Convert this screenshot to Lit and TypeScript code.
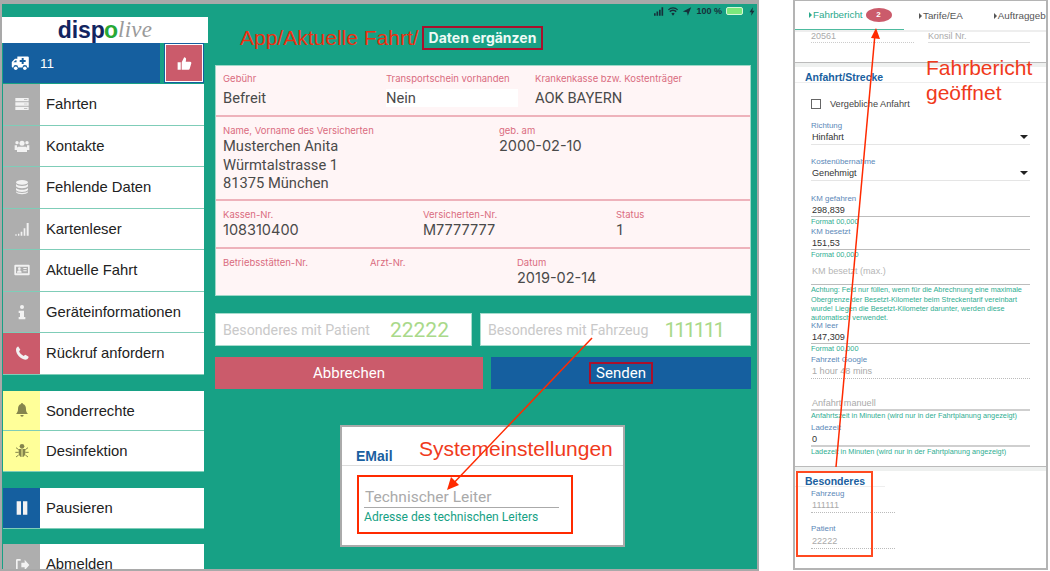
import { LitElement, html, css, svg } from "lit";
import { customElement } from "lit/decorators.js";

const ICONS = {
  server: svg`<path d="M2 3h20v5H2zM2 9.500h20v5H2zM2 16h20v5H2z"/><path fill="#aeaeae" d="M15 5h5v1h-5zM15 11.500h5v1h-5zM15 18h5v1h-5z"/>`,
  users: svg`<circle cx="12" cy="8" r="3.800"/><circle cx="4.500" cy="7" r="2.500"/><circle cx="19.500" cy="7" r="2.500"/><path d="M6.500 13h11c1 0 2 1 2 2v6h-15v-6c0-1 1-2 2-2zM1 11h3.500v7H1zM19.500 11H23v7h-3.500z"/>`,
  db: svg`<ellipse cx="12" cy="5" rx="9" ry="3.500"/><path d="M3 7.500c1 2 5 3 9 3s8-1 9-3V11c-1 2-5 3-9 3s-8-1-9-3zM3 13c1 2 5 3 9 3s8-1 9-3v3.500c-1 2-5 3-9 3s-8-1-9-3zM3 18.500c1 2 5 2.500 9 2.500s8-.5 9-2.500V20c-1 2-5 3-9 3s-8-1-9-3z"/>`,
  signal: svg`<path d="M2 20h2v2H2zM6 19h2v3H6zM10 16h2.500v6H10zM14.500 11H17v11h-2.500zM19 3h3v19h-3z"/>`,
  card: svg`<path fill-rule="evenodd" d="M2 4h20a1.500 1.500 0 011.500 1.500v13A1.500 1.500 0 0122 20H2a1.500 1.500 0 01-1.500-1.500v-13A1.500 1.500 0 012 4zM3 7v10h18V7z"/><circle cx="8" cy="10" r="2"/><path d="M4.500 16c0-2 1-3.500 3.500-3.500s3.500 1.500 3.500 3.500zM14 9h5v1.500h-5zM14 12.500h5V14h-5z"/>`,
  info: svg`<circle cx="12" cy="4.500" r="3"/><path d="M7 10h8v9.500h2V23H7v-3.500h2V13.500H7z"/>`,
  phone: svg`<path d="M6.600 2.500 9.500 7 7.600 9.500c1 2.700 4 5.800 6.900 6.900l2.500-1.900 4.500 2.900c.4.300.5.800.3 1.200-1 2-2.700 3.400-4.800 3.400C10 21 3 14 3 7c0-2 1.400-3.800 2.400-4.400.4-.2.900-.3 1.200-.1z"/>`,
  bell: svg`<path d="M12 1.500a1.500 1.500 0 011.500 1.600C17 3.800 18 7.500 18 11c0 3 1 5 3 7H3c2-2 3-4 3-7 0-3.500 1-7.200 4.500-7.900A1.500 1.500 0 0112 1.500zM9.500 19.500h5a2.500 2.500 0 01-5 0z"/>`,
  bug: svg`<circle cx="12" cy="5" r="3.500"/><path d="M7 9h4.300v12C9 21 7 18 7 15zM12.700 9H17v6c0 3-2 6-4.300 6z"/><path stroke="currentColor" stroke-width="1.500" fill="none" d="M7 10 3 7M17 10l4-3M7 14H2M17 14h5M7 18l-4 3M17 18l4 3"/>`,
  pause: svg`<path d="M4 2h6.500v20H4zM13.500 2H20v20h-6.500z"/>`,
  out: svg`<path d="M10 3H5a2 2 0 00-2 2v14a2 2 0 002 2h5v-2.500H5.500v-13H10z"/><path d="M11 8.500h5V4l7 8-7 8v-4.500h-5z"/>`,
};

type IconName = keyof typeof ICONS;

const MENU: { label: string; icon: IconName; tone: string }[][] = [
  [
    { label: "Fahrten", icon: "server", tone: "grey" },
    { label: "Kontakte", icon: "users", tone: "grey" },
    { label: "Fehlende Daten", icon: "db", tone: "grey" },
    { label: "Kartenleser", icon: "signal", tone: "grey" },
    { label: "Aktuelle Fahrt", icon: "card", tone: "grey" },
    { label: "Geräteinformationen", icon: "info", tone: "grey" },
    { label: "Rückruf anfordern", icon: "phone", tone: "red" },
  ],
  [
    { label: "Sonderrechte", icon: "bell", tone: "yellow" },
    { label: "Desinfektion", icon: "bug", tone: "yellow" },
  ],
  [{ label: "Pausieren", icon: "pause", tone: "blue" }],
  [{ label: "Abmelden", icon: "out", tone: "grey" }],
];

@customElement("app-root")
export class AppRoot extends LitElement {
  static override styles = css`
    :host {
      display: block;
      width: 1050px;
      height: 571px;
      position: relative;
      overflow: hidden;
      background: #fff;
      font-family: "Liberation Sans", Arial, sans-serif;
    }

    .page {
      display: flex;
      height: 571px;
    }

    /* left: the tablet screenshot */
    .tablet {
      box-sizing: border-box;
      width: 759px;
      height: 571px;
      flex: none;
      display: flex;
      background: #17a185;
      border: solid #a9a9a9;
      border-width: 4px 2px 2px 2px;
      overflow: hidden;
    }

    .side {
      width: 206px;
      flex: none;
      padding-top: 13px;
    }

    .logo {
      height: 26px;
      background: #fff;
      display: flex;
      justify-content: center;
      align-items: center;
      font-size: 23px;
      line-height: 26px;
    }

    .logo b {
      color: #12245f;
    }

    .logo .o {
      color: #27a935;
      margin-left: -1px;
    }

    .logo i {
      font-family: "Liberation Serif", serif;
      font-weight: 400;
      color: #9a9a9a;
      letter-spacing: 0.3px;
    }

    .status {
      height: 40px;
      margin-left: 1px;
      width: 201px;
      display: flex;
      gap: 4px;
    }

    .vehicle {
      flex: 1;
      display: flex;
      align-items: center;
      gap: 10px;
      padding-left: 8px;
      background: #155f9f;
      color: #fff;
      font-size: 13.500px;
    }

    .vehicle svg {
      width: 19px;
      height: 19px;
      fill: #fff;
    }

    .thumb {
      box-sizing: border-box;
      width: 40px;
      border: 2px solid #fff;
      background: #cb5b6b;
      display: flex;
      align-items: center;
      justify-content: center;
      outline: 1px solid #155f9f;
      outline-offset: -1px;
    }

    .thumb svg {
      width: 15px;
      height: 15px;
      fill: #fff;
    }

    .menu {
      margin-left: 1px;
      width: 201px;
      margin-top: 16px;
    }

    .menu.first {
      margin-top: 1px;
    }

    .menu.last {
      margin-top: 15px;
    }

    .row {
      box-sizing: border-box;
      height: 41.500px;
      display: flex;
      background: #fff;
      border-bottom: 1px solid #7fcdb8;
      font-size: 14.800px;
      color: #222;
    }

    .menu.pair .row {
      height: 40.700px;
    }

    .row .icon {
      width: 37px;
      flex: none;
      display: flex;
      align-items: center;
      justify-content: center;
      color: #f2f2f2;
    }

    .row svg {
      width: 16px;
      height: 16px;
      fill: currentColor;
    }

    .row .text {
      padding-left: 6px;
      line-height: 41px;
    }

    .icon.grey {
      background: #aeaeae;
    }

    .icon.red {
      background: #cb5b6b;
    }

    .icon.blue {
      background: #155f9f;
    }

    .icon.yellow {
      background: #ffff99;
      color: #85854d !important;
    }

    /* main column of the tablet */
    .main {
      width: 536px;
      margin-left: 7px;
      flex: none;
    }

    .bar {
      height: 12px;
      margin-right: -6px;
      display: flex;
      justify-content: flex-end;
      align-items: center;
      gap: 4px;
      font: 700 9px "Liberation Sans", sans-serif;
      color: #16303a;
      padding-top: 1px;
    }

    .bar svg {
      width: 10px;
      height: 9px;
      fill: #16303a;
    }

    .battery {
      width: 15px;
      height: 6px;
      background: #7be87c;
      border: 1px solid #d5f7d8;
      border-radius: 2px;
    }

    .title {
      margin-top: 9px;
      height: 24px;
      padding-left: 25px;
      display: flex;
      align-items: center;
      gap: 3px;
      font-size: 21px;
      color: #ee2f10;
    }

    .boxed {
      box-sizing: border-box;
      height: 24px;
      border: 2px solid #a9102c;
      padding: 0 5px;
      color: #eefaf6;
      font: 700 14px/20px Inter, sans-serif;
    }

    .card {
      box-sizing: border-box;
      margin-top: 15px;
      height: 231px;
      background: #fff5f6;
      border: 1px solid #9fd8c8;
      font-family: Inter, sans-serif;
    }

    .line {
      display: grid;
      box-sizing: border-box;
      padding: 7px 7px 0;
      border-bottom: 2px solid #eeb2bb;
    }

    .line:last-child {
      border-bottom: none;
    }

    .l1 {
      height: 51px;
      grid-template-columns: 163px 149px 1fr;
    }

    .l2 {
      height: 84px;
      grid-template-columns: 276px 1fr;
      padding-top: 8px;
    }

    .l3 {
      height: 48px;
      grid-template-columns: 200px 193px 1fr;
      padding-top: 8px;
    }

    .l4 {
      height: 46px;
      grid-template-columns: 147px 147px 1fr;
      padding-top: 8px;
    }

    .cap {
      font-size: 9.500px;
      line-height: 12px;
      color: #da6c80;
    }

    .val {
      font: 14.700px/18.500px Roboto, sans-serif;
      color: #4a4a4a;
    }

    .val.num {
      font: 14.500px/18.500px Inter, sans-serif;
    }

    .l1 .val {
      margin-top: 4px;
      height: 18px;
    }

    .nein {
      background: #fff;
      width: 132px;
    }

    .fields {
      margin-top: 17px;
      display: grid;
      grid-template-columns: 257px 271px;
      gap: 8px;
    }

    .input {
      box-sizing: border-box;
      height: 33px;
      background: #fff;
      border: 1px solid #a6dccd;
      padding-left: 7px;
      display: flex;
      align-items: center;
      font: 14.200px Roboto, sans-serif;
      color: #c9c9c9;
    }

    .input span {
      margin-left: 20px;
      font-size: 21px;
      color: #a9d98a;
    }

    .input span.tight {
      margin-left: 16px;
      letter-spacing: -2px;
    }

    .actions {
      margin-top: 11px;
      display: grid;
      grid-template-columns: 268px 260px;
      gap: 8px;
    }

    .btn {
      height: 32px;
      display: flex;
      align-items: center;
      justify-content: center;
      color: #fff;
      font: 15px Roboto, sans-serif;
    }

    .btn.cancel {
      background: #cb5b6b;
    }

    .btn.send {
      background: #155f9f;
    }

    .btn.send span {
      border: 2px solid #a9102c;
      padding: 0 5px;
      line-height: 18px;
    }

    .mail {
      box-sizing: border-box;
      margin: 36px 0 0 125px;
      width: 285px;
      height: 122px;
      background: #fff;
      border: 2px solid #aaa;
    }

    .mail h3 {
      margin: 0;
      height: 39px;
      box-sizing: border-box;
      padding: 21px 0 0 14px;
      border-bottom: 1px solid #ddd;
      font-size: 14px;
      line-height: 16px;
      color: #1a5fa0;
    }

    .mail .hold {
      margin: 21px 0 0 22px;
      width: 195px;
      height: 21px;
      border-bottom: 1px solid #aaa;
      padding-left: 1px;
      box-sizing: border-box;
      font: 15.500px/20px Roboto, sans-serif;
      color: #aaa;
    }

    .mail .help {
      margin: 2px 0 0 22px;
      font: 12.100px/14px Roboto, sans-serif;
      color: #17a185;
    }

    /* right: the opened report */
    .report {
      box-sizing: border-box;
      width: 255px;
      height: 570px;
      margin-left: 34px;
      border: solid #b4b4b4;
      border-width: 1px 2px 2px 2px;
      overflow: hidden;
      background: #fff;
    }

    .tabs {
      height: 31px;
      box-sizing: border-box;
      display: flex;
      align-items: center;
      font-size: 9.800px;
      color: #555;
      white-space: nowrap;
      border-bottom: 2px solid #eee;
      overflow: hidden;
    }

    .tab {
      display: flex;
      align-items: center;
      flex: none;
    }

    .tab::before {
      content: "";
      border: 3px solid transparent;
      border-left: 3px solid currentColor;
      border-right: none;
      margin-right: 1px;
    }

    .tab.on {
      box-sizing: border-box;
      width: 109px;
      height: 31px;
      padding-left: 14px;
      color: #2aa98c;
      border-bottom: 2px solid #4dbb9f;
    }

    .tab + .tab {
      margin-left: 15px;
    }

    .tab + .tab + .tab {
      margin-left: 31px;
    }

    .badge {
      margin-left: 3px;
      width: 26px;
      height: 14px;
      border-radius: 50%;
      background: #cb5b6b;
      color: #fff;
      font-size: 8px;
      font-weight: 700;
      line-height: 14px;
      text-align: center;
    }

    .pad {
      padding-left: 16px;
      width: 219px;
    }

    .twin {
      display: grid;
      grid-template-columns: 103px 102px;
      gap: 14px;
      height: 11px;
      overflow: hidden;
      font-size: 9px;
      line-height: 8px;
      color: #aaa;
    }

    .twin div {
      border-bottom: 1.500px dotted #ccc;
      height: 10px;
    }

    .twin div + div {
      border-bottom: 2px solid #ddd;
    }

    .band {
      margin-top: 19px;
      height: 5px;
      border-top: 1.500px solid #bbb;
      background: #eef0ef;
      box-sizing: border-box;
    }

    .head {
      box-sizing: border-box;
      height: 16px;
      padding: 4px 0 0 10px;
      border-bottom: 1px solid #eee;
      font-size: 10.500px;
      font-weight: 700;
      line-height: 12px;
      color: #1a5fa0;
    }

    .check {
      margin-top: 15px;
      height: 12px;
      display: flex;
      align-items: center;
      font-size: 9.200px;
      color: #444;
    }

    .check i {
      box-sizing: border-box;
      width: 10px;
      height: 10px;
      border: 1px solid #666;
      margin-right: 9px;
    }

    .lab {
      height: 12px;
      font-size: 7.900px;
      line-height: 12px;
      color: #5b88b8;
    }

    .v {
      height: 11px;
      font-size: 9.100px;
      line-height: 11px;
      color: #333;
      padding-left: 1px;
      position: relative;
    }

    .v.sel::after {
      content: "";
      position: absolute;
      right: 2px;
      top: 3px;
      border: 4px solid transparent;
      border-top: 4px solid #222;
    }

    .v.tall {
      height: 25px;
      line-height: 25px;
      color: #b5b5b5;
    }

    .v.ghost {
      color: #aaa;
    }

    .rule {
      height: 1px;
      background: #bcbcbc;
    }

    .rule.soft {
      background: #e5e5e5;
    }

    .rule.fat {
      height: 2px;
      background: #cfcfcf;
    }

    .rule.dots {
      background: none;
      border-bottom: 1px dotted #bbb;
    }

    .hint {
      font-size: 7.300px;
      line-height: 9.200px;
      color: #2fae92;
      white-space: nowrap;
    }

    .gap1 {
      margin-top: 1px;
    }

    .gap10 {
      margin-top: 10px;
    }

    .gap11 {
      margin-top: 11px;
    }

    .gap12 {
      margin-top: 12px;
    }

    .gap19 {
      margin-top: 19px;
    }

    .up2 {
      margin-top: -2px;
    }

    .narrow {
      width: 84px;
    }

    .headnarrow {
      width: 90px;
    }

    /* red annotations painted over the screenshots */
    .marks {
      position: absolute;
      inset: 0;
      width: 1050px;
      height: 571px;
      pointer-events: none;
    }

    .note {
      position: absolute;
      color: #f03a1c;
      font-size: 21px;
      line-height: 25px;
      white-space: nowrap;
    }

    .note.system {
      left: 419px;
      top: 436px;
    }

    .note.opened {
      left: 926px;
      top: 55px;
    }
  `;

  private _icon(name: IconName) {
    return html`<svg viewBox="0 0 24 24">${ICONS[name]}</svg>`;
  }

  private _sidebar() {
    return html`
      <div class="side">
        <div class="logo"><b>disp</b><b class="o">o</b><i>live</i></div>
        <div class="status">
          <div class="vehicle">
            <svg viewBox="0 0 24 24">
              <path d="M1 16v-6l4-4h3V3h13a1.500 1.500 0 011.500 1.500V17h-2a3 3 0 00-6 0H9a3 3 0 00-6 0H2a1 1 0 01-1-1z" />
              <path fill="#155f9f" d="M13.500 5h2.500v2.500h2.500V10H16v2.500h-2.500V10H11V7.500h2.500zM3 10.500 5.800 8H7v2.500z" />
              <circle cx="6" cy="18" r="2.300" />
              <circle cx="17.500" cy="18" r="2.300" />
            </svg>
            <span>11</span>
          </div>
          <div class="thumb">
            <svg viewBox="0 0 24 24">
              <path d="M1 10h5v12H1zM7.500 10l4-8c2 0 3.300 1.500 3 3.500L14 9h7c1.500 0 2.300 1.500 1.800 2.800l-2.500 8.500c-.3 1-1 1.700-2 1.700H7.500z" />
            </svg>
          </div>
        </div>
        ${MENU.map(
          (group, i) => html`
            <div class="menu ${i === 0 ? "first" : ""} ${i === 1 ? "pair" : ""} ${i === 3 ? "last" : ""}">
              ${group.map(
                (item) => html`
                  <div class="row">
                    <div class="icon ${item.tone}">${this._icon(item.icon)}</div>
                    <div class="text">${item.label}</div>
                  </div>
                `
              )}
            </div>
          `
        )}
      </div>
    `;
  }

  private _cell(label: string, value = "", extra = "") {
    return html`
      <div>
        <div class="cap">${label}</div>
        <div class="val ${extra}">${value}</div>
      </div>
    `;
  }

  private _main() {
    return html`
      <div class="main">
        <div class="bar">
          <svg viewBox="0 0 12 10"><path d="M0 7h2v3H0zM3 5h2v5H3zM6 3h2v7H6zM9 0h2v10H9z" /></svg>
          <svg viewBox="0 0 12 10"><path d="M6 10 4 7.500a3 3 0 014 0zM2.800 6 1.500 4.500a6.500 6.500 0 019 0L9.200 6a4.500 4.500 0 00-6.400 0zM.8 3.500 0 2.500a8.500 8.500 0 0112 0l-.8 1a7.500 7.500 0 00-10.400 0z" /></svg>
          <svg viewBox="0 0 12 10"><path d="M1 5 11 0 7 10 6 6z" /></svg>
          <span>100 %</span>
          <div class="battery"></div>
          <svg viewBox="0 0 12 10"><path d="M7 0 3 6h2.500L5 10l4-6H6.500z" /></svg>
        </div>
        <div class="title">
          <span>App/Aktuelle Fahrt/</span>
          <span class="boxed">Daten ergänzen</span>
        </div>
        <div class="card">
          <div class="line l1">
            ${this._cell("Gebühr", "Befreit")}
            ${this._cell("Transportschein vorhanden", "Nein", "nein")}
            ${this._cell("Krankenkasse bzw. Kostenträger", "AOK BAYERN")}
          </div>
          <div class="line l2">
            <div>
              <div class="cap">Name, Vorname des Versicherten</div>
              <div class="val">Musterchen Anita<br />Würmtalstrasse 1<br />81375 München</div>
            </div>
            ${this._cell("geb. am", "2000-02-10", "num")}
          </div>
          <div class="line l3">
            ${this._cell("Kassen-Nr.", "108310400", "num")}
            ${this._cell("Versicherten-Nr.", "M7777777", "num")}
            ${this._cell("Status", "1")}
          </div>
          <div class="line l4">
            ${this._cell("Betriebsstätten-Nr.")}
            ${this._cell("Arzt-Nr.")}
            ${this._cell("Datum", "2019-02-14", "num")}
          </div>
        </div>
        <div class="fields">
          <div class="input">Besonderes mit Patient<span>22222</span></div>
          <div class="input">Besonderes mit Fahrzeug<span class="tight">111111</span></div>
        </div>
        <div class="actions">
          <div class="btn cancel">Abbrechen</div>
          <div class="btn send"><span>Senden</span></div>
        </div>
        <div class="mail">
          <h3>EMail</h3>
          <div class="hold">Technischer Leiter</div>
          <div class="help">Adresse des technischen Leiters</div>
        </div>
      </div>
    `;
  }

  private _report() {
    return html`
      <div class="report">
        <div class="tabs">
          <div class="tab on">Fahrbericht<span class="badge">2</span></div>
          <div class="tab">Tarife/EA</div>
          <div class="tab">Auftraggeber</div>
        </div>
        <div class="pad twin"><div>20561</div><div>Konsil Nr.</div></div>
        <div class="band"></div>
        <div class="head">Anfahrt/Strecke</div>
        <div class="pad check"><i></i>Vergebliche Anfahrt</div>
        <div class="pad gap10">
          <div class="lab">Richtung</div>
          <div class="v sel">Hinfahrt</div>
          <div class="rule soft gap1"></div>
          <div class="lab gap11">Kostenübernahme</div>
          <div class="v sel">Genehmigt</div>
          <div class="rule soft gap1"></div>
          <div class="lab gap12">KM gefahren</div>
          <div class="v">298,839</div>
          <div class="rule"></div>
          <div class="hint">Format 00,000</div>
          <div class="lab">KM besetzt</div>
          <div class="v">151,53</div>
          <div class="rule"></div>
          <div class="hint">Format 00,000</div>
          <div class="v tall">KM besetzt (max.)</div>
          <div class="rule"></div>
          <div class="hint">
            Achtung: Feld nur füllen, wenn für die Abrechnung eine maximale<br />
            Obergrenze der Besetzt-Kilometer beim Streckentarif vereinbart<br />
            wurde! Liegen die Besetzt-Kilometer darunter, werden diese<br />
            automatisch verwendet.
          </div>
          <div class="lab up2">KM leer</div>
          <div class="v">147,309</div>
          <div class="rule"></div>
          <div class="hint">Format 00,000</div>
          <div class="lab gap1">Fahrzeit Google</div>
          <div class="v ghost">1 hour 48 mins</div>
          <div class="rule dots"></div>
          <div class="v ghost gap19">Anfahrt manuell</div>
          <div class="rule fat"></div>
          <div class="hint">Anfahrtszeit in Minuten (wird nur in der Fahrtplanung angezeigt)</div>
          <div class="lab gap1">Ladezeit</div>
          <div class="v">0</div>
          <div class="rule fat"></div>
          <div class="hint">Ladezeit in Minuten (wird nur in der Fahrtplanung angezeigt)</div>
        </div>
        <div class="band gap10"></div>
        <div class="head headnarrow">Besonderes</div>
        <div class="pad narrow gap1">
          <div class="lab">Fahrzeug</div>
          <div class="v ghost">111111</div>
          <div class="rule dots"></div>
          <div class="lab gap10">Patient</div>
          <div class="v ghost gap1">22222</div>
          <div class="rule dots"></div>
        </div>
      </div>
    `;
  }

  override render() {
    return html`
      <div class="page">
        <div class="tablet">${this._sidebar()}${this._main()}</div>
        ${this._report()}
      </div>
      <svg class="marks" viewBox="0 0 1050 571" fill="none">
        <path stroke="#ff2a00" stroke-width="1.500" d="M592 338 449 488" />
        <path fill="#ff2a00" d="M447 490 451 477 459 485z" />
        <path stroke="#ff2a00" stroke-width="1.500" d="M836 467 875 34" />
        <path fill="#ff2a00" d="M876 28 880 39 871 38z" />
        <rect x="358" y="476" width="214" height="57" stroke="#ff2a00" stroke-width="2" />
        <rect x="797" y="472" width="75" height="84" stroke="#ff4a20" stroke-width="2" />
      </svg>
      <div class="note system">Systemeinstellungen</div>
      <div class="note opened">Fahrbericht<br />geöffnet</div>
    `;
  }
}

declare global {
  interface HTMLElementTagNameMap {
    "app-root": AppRoot;
  }
}
